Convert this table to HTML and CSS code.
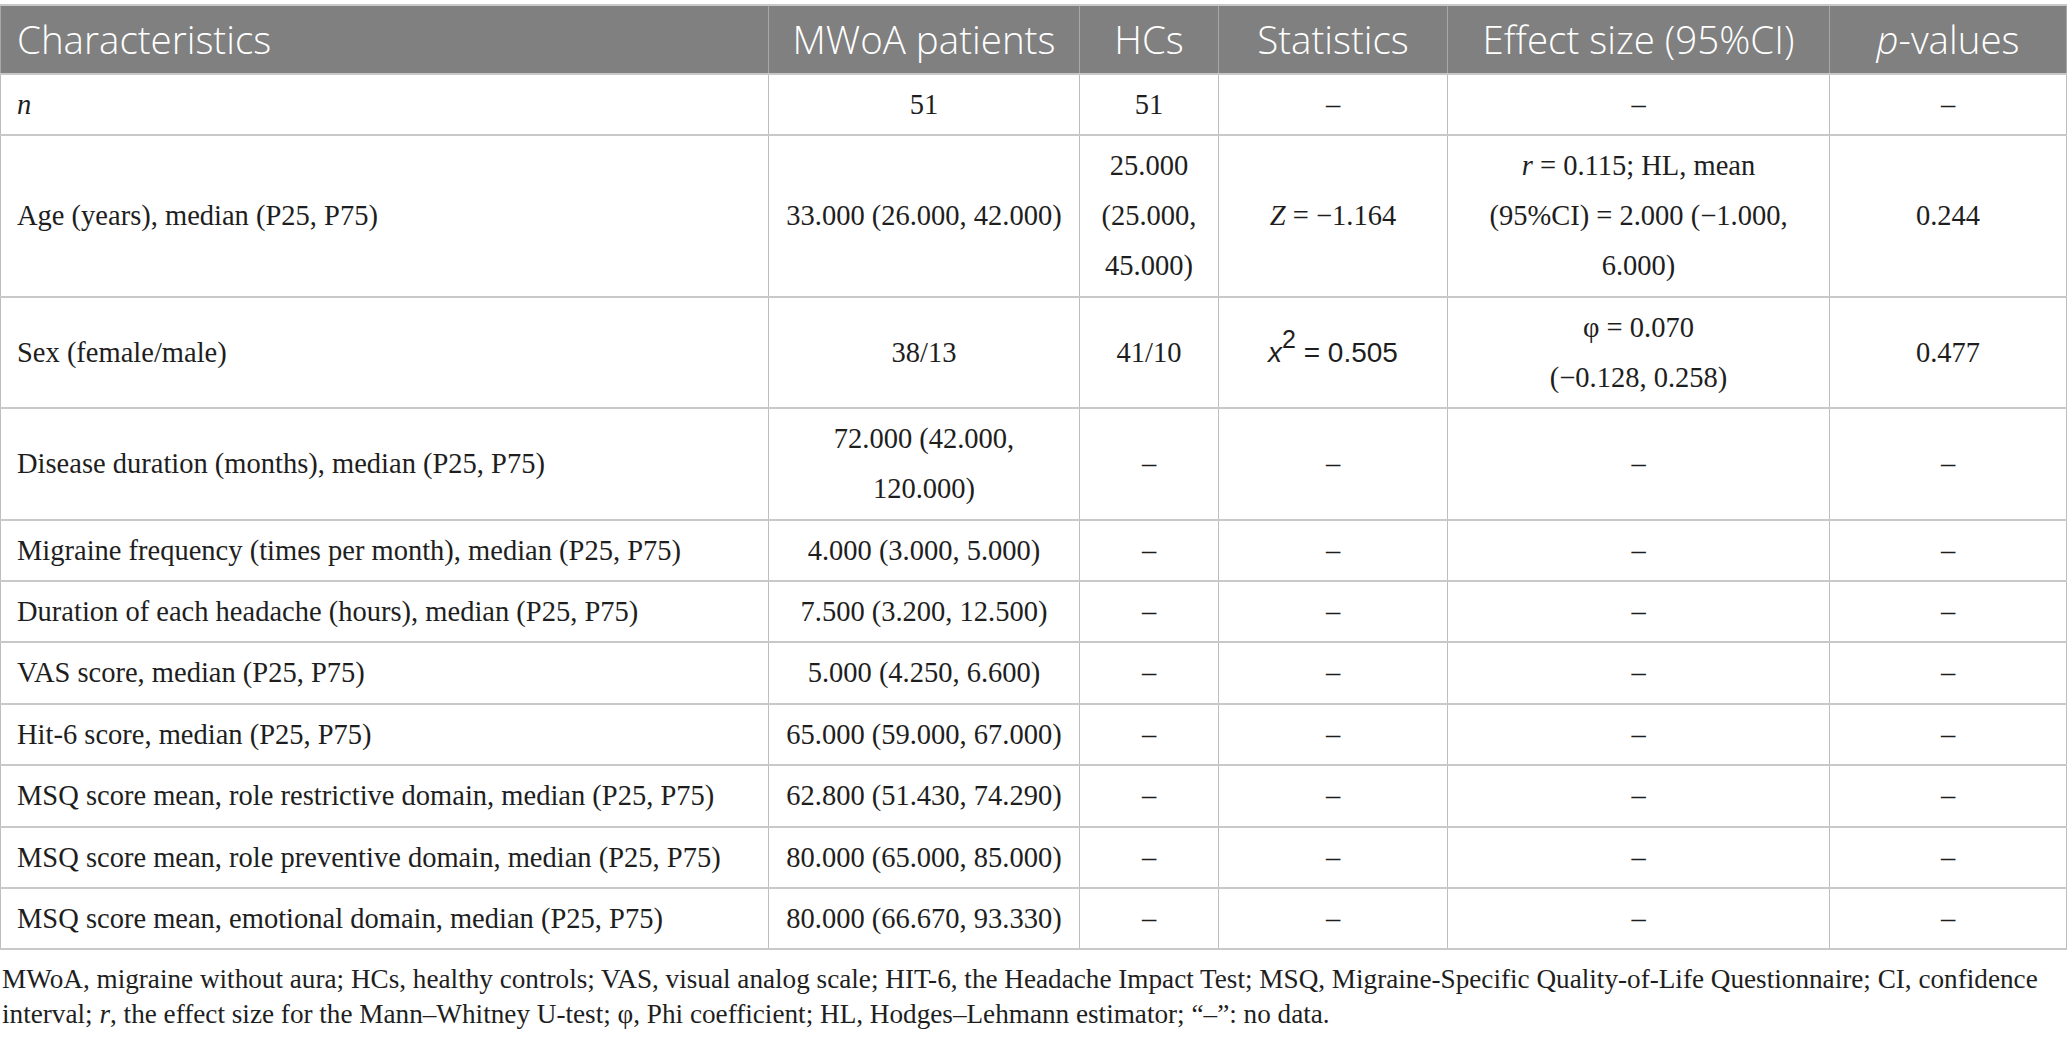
FILE: index.html
```html
<!DOCTYPE html>
<html lang="en">
<head>
<meta charset="utf-8">
<title>Table</title>
<link rel="stylesheet" href="styles.css">
</head>
<body>
<div class="wrap">
  <table class="data">
    <colgroup>
      <col class="c1"><col class="c2"><col class="c3"><col class="c4"><col class="c5"><col class="c6">
    </colgroup>
    <thead>
      <tr>
        <th class="left">Characteristics</th>
        <th>MWoA patients</th>
        <th>HCs</th>
        <th>Statistics</th>
        <th>Effect size (95%CI)</th>
        <th><i>p</i>-values</th>
      </tr>
    </thead>
    <tbody>
      <tr>
        <td class="label"><i>n</i></td>
        <td>51</td><td>51</td><td>–</td><td>–</td><td>–</td>
      </tr>
      <tr>
        <td class="label">Age (years), median (P25, P75)</td>
        <td>33.000 (26.000, 42.000)</td>
        <td>25.000<br>(25.000,<br>45.000)</td>
        <td><i>Z</i> = −1.164</td>
        <td><i>r</i> = 0.115; HL, mean<br>(95%CI) = 2.000 (−1.000,<br>6.000)</td>
        <td>0.244</td>
      </tr>
      <tr>
        <td class="label">Sex (female/male)</td>
        <td>38/13</td>
        <td>41/10</td>
        <td><span class="chi"><i>x</i><sup>2</sup> = 0.505</span></td>
        <td>φ = 0.070<br>(−0.128, 0.258)</td>
        <td>0.477</td>
      </tr>
      <tr>
        <td class="label">Disease duration (months), median (P25, P75)</td>
        <td>72.000 (42.000,<br>120.000)</td>
        <td>–</td><td>–</td><td>–</td><td>–</td>
      </tr>
      <tr>
        <td class="label">Migraine frequency (times per month), median (P25, P75)</td>
        <td>4.000 (3.000, 5.000)</td>
        <td>–</td><td>–</td><td>–</td><td>–</td>
      </tr>
      <tr>
        <td class="label">Duration of each headache (hours), median (P25, P75)</td>
        <td>7.500 (3.200, 12.500)</td>
        <td>–</td><td>–</td><td>–</td><td>–</td>
      </tr>
      <tr>
        <td class="label">VAS score, median (P25, P75)</td>
        <td>5.000 (4.250, 6.600)</td>
        <td>–</td><td>–</td><td>–</td><td>–</td>
      </tr>
      <tr>
        <td class="label">Hit-6 score, median (P25, P75)</td>
        <td>65.000 (59.000, 67.000)</td>
        <td>–</td><td>–</td><td>–</td><td>–</td>
      </tr>
      <tr>
        <td class="label">MSQ score mean, role restrictive domain, median (P25, P75)</td>
        <td>62.800 (51.430, 74.290)</td>
        <td>–</td><td>–</td><td>–</td><td>–</td>
      </tr>
      <tr>
        <td class="label">MSQ score mean, role preventive domain, median (P25, P75)</td>
        <td>80.000 (65.000, 85.000)</td>
        <td>–</td><td>–</td><td>–</td><td>–</td>
      </tr>
      <tr>
        <td class="label">MSQ score mean, emotional domain, median (P25, P75)</td>
        <td>80.000 (66.670, 93.330)</td>
        <td>–</td><td>–</td><td>–</td><td>–</td>
      </tr>
    </tbody>
  </table>
  <p class="note">MWoA, migraine without aura; HCs, healthy controls; VAS, visual analog scale; HIT-6, the Headache Impact Test; MSQ, Migraine-Specific Quality-of-Life Questionnaire; CI, confidence<br>interval; <i>r</i>, the effect size for the Mann–Whitney U-test; φ, Phi coefficient; HL, Hodges–Lehmann estimator; “–”: no data.</p>
</div>
</body>
</html>
```

FILE: styles.css
```css
html, body {
  margin: 0;
  padding: 0;
  background: #ffffff;
}

.wrap {
  padding-top: 4px;
  color: #1e1e1e;
}

.data {
  border-collapse: collapse;
  table-layout: fixed;
  width: 2066px;
  font-family: "Liberation Serif", "Times New Roman", serif;
  font-size: 28.5px;
}

.c1 { width: 768px; }
.c2 { width: 311px; }
.c3 { width: 139px; }
.c4 { width: 229px; }
.c5 { width: 382px; }
.c6 { width: 237px; }

.data th {
  background: #808080;
  color: #ffffff;
  font-family: "Open Sans", "Noto Sans", sans-serif;
  font-weight: 300;
  font-size: 38.5px;
  line-height: 49px;
  padding: 9px 16px;
  text-align: center;
  border-top: 2px solid #c8c8c8;
  border-left: 1px solid #a8a8a8;
  border-right: 1px solid #a8a8a8;
  border-bottom: 2px solid #c8c8c8;
  white-space: nowrap;
}

.data th.left {
  text-align: left;
}

.data td {
  padding: 5px 16px 4.4px;
  line-height: 50px;
  text-align: center;
  vertical-align: middle;
  border-left: 1px solid #bdbdbd;
  border-right: 1px solid #bdbdbd;
  border-bottom: 2px solid #c8c8c8;
}

.data td.label {
  text-align: left;
}

.chi {
  font-family: "Liberation Sans", Arial, sans-serif;
  font-size: 28px;
}

.chi sup {
  font-size: 25px;
  line-height: 0;
  vertical-align: 14px;
}

.note {
  margin: 12px 0 0 2px;
  font-family: "Liberation Serif", "Times New Roman", serif;
  font-size: 27.2px;
  line-height: 35px;
  color: #1e1e1e;
}
```
